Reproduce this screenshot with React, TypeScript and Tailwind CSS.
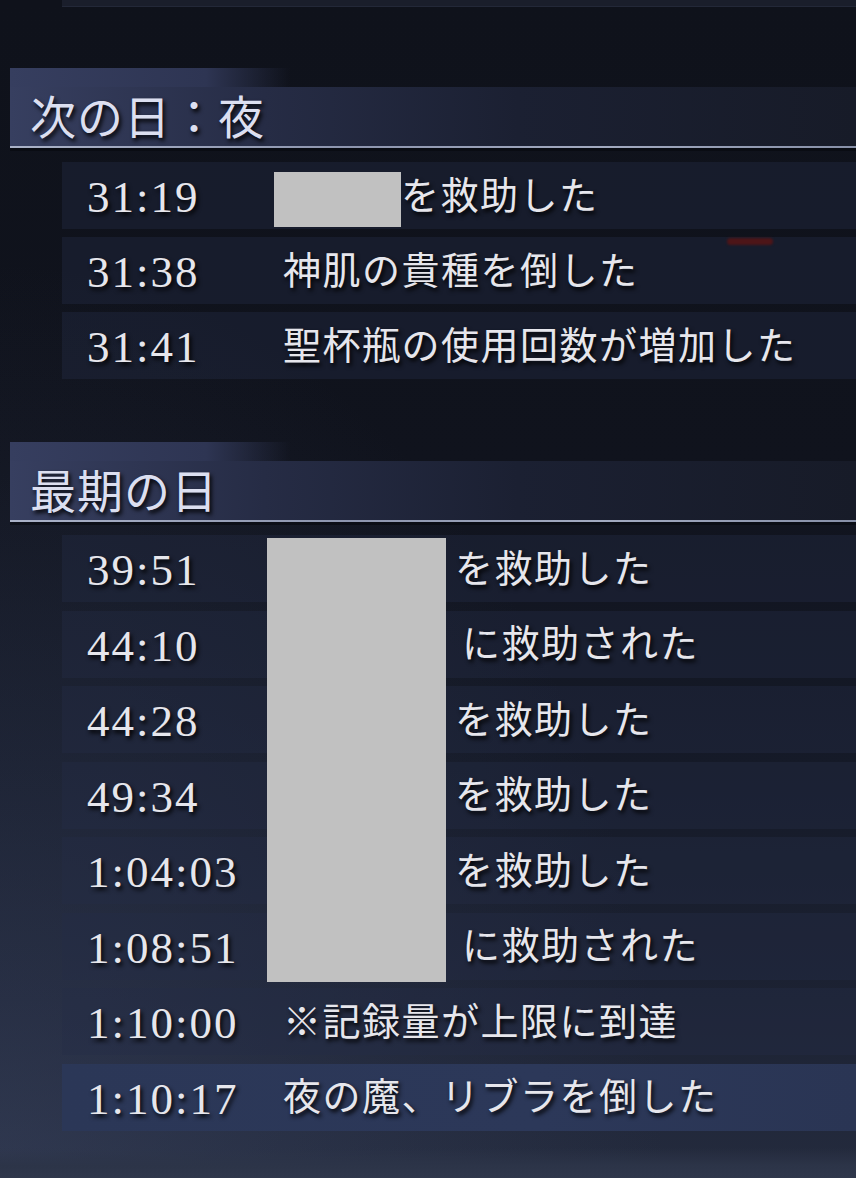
import React from "react";

type Entry = { time: string; text: string; pad?: number; active?: boolean };

const nightRows: Entry[] = [
  { time: "31:38", text: "神肌の貴種を倒した" },
  { time: "31:41", text: "聖杯瓶の使用回数が増加した" },
];

const lastDayRows: Entry[] = [
  { time: "39:51", text: "を救助した", pad: 172 },
  { time: "44:10", text: "に救助された", pad: 179 },
  { time: "44:28", text: "を救助した", pad: 172 },
  { time: "49:34", text: "を救助した", pad: 172 },
  { time: "1:04:03", text: "を救助した", pad: 172 },
  { time: "1:08:51", text: "に救助された", pad: 179 },
  { time: "1:10:00", text: "※記録量が上限に到達" },
  { time: "1:10:17", text: "夜の魔、リブラを倒した", active: true },
];

const shadow = "[text-shadow:2px_3px_4px_rgba(0,0,0,0.95)]";

function Time({ value, width = "w-[196px]" }: { value: string; width?: string }) {
  return (
    <span
      className={`${width} mt-[4px] shrink-0 text-[45px] leading-none tracking-[2px] text-[#e6e6ec] ${shadow} font-['Liberation_Serif',serif]`}
    >
      {value}
    </span>
  );
}

function Phrase({ children }: { children: React.ReactNode }) {
  return (
    <span
      className={`mb-[6px] whitespace-nowrap text-[38px] leading-none tracking-[1.5px] text-[#e6e6ec] ${shadow} font-['Noto_Sans_CJK_JP',sans-serif]`}
    >
      {children}
    </span>
  );
}

function Row({ entry }: { entry: Entry }) {
  return (
    <div
      className={`flex h-[67px] items-center pl-[25px] ${
        entry.active
          ? "bg-[linear-gradient(90deg,#2b3757,#2c3859_60%,#2a3554)]"
          : "bg-[rgba(38,46,72,0.38)]"
      }`}
    >
      <Time value={entry.time} />
      {entry.pad ? <span className="shrink-0" style={{ width: entry.pad }} /> : null}
      <Phrase>{entry.text}</Phrase>
    </div>
  );
}

function DayHeader({ title }: { title: string }) {
  return (
    <div className="ml-[10px] flex flex-col">
      <div className="h-[19px] w-[280px] bg-[linear-gradient(90deg,#363e5f,#2e3553_70%,rgba(30,35,55,0))]" />
      <div className="flex h-[59px] items-center bg-[linear-gradient(90deg,#373f60,#262c45_30%,#1b2032_60%,#171b28)] pb-[6px] pl-[20px]">
        <span
          className={`text-[46px] leading-none tracking-[1px] text-[#dcdff0] ${shadow} font-['Noto_Sans_CJK_JP',sans-serif]`}
        >
          {title}
        </span>
      </div>
      <div className="h-[2px] bg-[linear-gradient(90deg,#aab2c8,#8d95ae_40%,#a2aac0_70%,#8790a8)]" />
      <div className="h-[3px] bg-[rgba(5,7,12,0.55)]" />
    </div>
  );
}

export default function App() {
  return (
    <div className="relative h-[1178px] w-[856px] overflow-hidden bg-[linear-gradient(180deg,#0f121b_0%,#10131d_40%,#151a28_65%,#1c2233_85%,#242b3e_100%)] font-['Noto_Sans_CJK_JP',sans-serif]">
      {/* soft light rising from the lower left corner */}
      <div className="pointer-events-none absolute inset-0 bg-[radial-gradient(ellipse_at_0%_100%,rgba(70,82,115,0.35),rgba(70,82,115,0)_55%)]" />
      <div className="pointer-events-none absolute bottom-0 left-0 right-0 h-[30px] bg-[linear-gradient(180deg,rgba(48,56,78,0),#2c3448_60%,#2f374b)]" />

      <div className="relative flex flex-col">
        {/* tail of the previous entry */}
        <div className="ml-[62px] h-[6px] bg-[#1a1e2b] shadow-[0_1px_0_#232838]" />

        <div className="mt-[62px]">
          <DayHeader title="次の日：夜" />
        </div>

        <div className="relative ml-[62px] mt-[11px] flex flex-col gap-[8px]">
          <div className="flex h-[67px] items-center bg-[rgba(38,46,72,0.38)] pl-[25px]">
            <Time value="31:19" width="w-[187px]" />
            <div className="mt-[10px] h-[55px] w-[127px] shrink-0 self-start bg-[#c1c1c1]" />
            <Phrase>を救助した</Phrase>
          </div>
          {nightRows.map((r) => (
            <Row key={r.time} entry={r} />
          ))}
          <div className="absolute left-[665px] top-[76px] h-[7px] w-[46px] rounded-sm bg-[#4d1518] blur-[1px]" />
        </div>

        <div className="mt-[63px]">
          <DayHeader title="最期の日" />
        </div>

        <div className="relative ml-[62px] mt-[10px] flex flex-col gap-[8.5px]">
          {lastDayRows.map((r) => (
            <Row key={r.time} entry={r} />
          ))}
          {/* name cell cover */}
          <div className="absolute left-[205px] top-[3px] h-[444px] w-[179px] bg-[#c1c1c1]" />
        </div>
      </div>
    </div>
  );
}
